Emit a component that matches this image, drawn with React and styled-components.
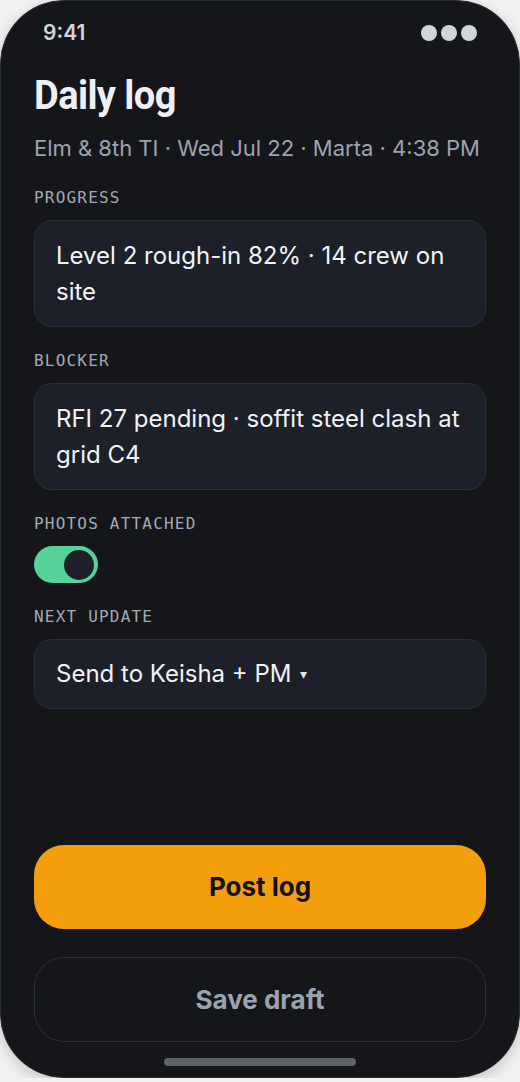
import React from 'react';
import styled, { createGlobalStyle } from 'styled-components';

const GlobalStyle = createGlobalStyle`
	html, body {
		margin: 0;
		padding: 0;
		background: #f1f1f1;
	}
	body {
		font-family: Inter, "Noto Sans", sans-serif;
		-webkit-font-smoothing: antialiased;
	}
	* { box-sizing: border-box; }
`;

const Phone = styled.div`
	width: 520px;
	height: 1078px;
	display: flex;
	flex-direction: column;
	background: #15161a;
	border: 1.5px solid #2a2d34;
	border-radius: 64px;
	overflow: hidden;
	box-shadow: 0 4px 14px rgba(0, 0, 0, 0.18);
`;

const StatusBar = styled.div`
	display: flex;
	justify-content: space-between;
	align-items: center;
	padding: 19px 42px 0 42px;
	height: 44px;
	color: #d1d5db;
	font-size: 21px;
	font-weight: 600;
`;

const Dots = styled.div`
	display: flex;
	gap: 4px;
	span {
		width: 16px;
		height: 16px;
		border-radius: 50%;
		background: #d1d5db;
	}
`;

const Content = styled.div`
	flex: 1;
	display: flex;
	flex-direction: column;
	padding: 0 33px;
`;

const Title = styled.h1`
	margin: 28px 0 0 0;
	align-self: flex-start;
	font-family: Roboto, "Liberation Sans", sans-serif;
	font-size: 40px;
	line-height: 46px;
	font-weight: 700;
	letter-spacing: -0.6px;
	color: #eef0f4;
	transform: scaleX(0.95);
	transform-origin: left center;
`;

const Meta = styled.div`
	margin-top: 15px;
	font-size: 22px;
	line-height: 28px;
	color: #9ca3af;
	white-space: nowrap;
`;

const Field = styled.div`
	display: flex;
	flex-direction: column;
	margin-top: ${(p) => p.$top}px;
`;

const Label = styled.div`
	font-family: "DejaVu Sans Mono", "Liberation Mono", monospace;
	font-size: 16px;
	line-height: 20px;
	letter-spacing: 1.2px;
	color: #a3a9b4;
	margin-bottom: 12px;
`;

const Box = styled.div`
	background: #1d2028;
	border: 1.5px solid #2c2f38;
	border-radius: 18px;
	padding: 16px 21px;
	min-height: ${(p) => (p.$select ? 70 : 107)}px;
	font-size: 24px;
	line-height: 36px;
	color: #f1f3f6;
	display: flex;
	align-items: center;
`;

const Caret = styled.span`
	font-size: 14px;
	margin-left: 9px;
	color: #e5e7eb;
`;

const Toggle = styled.div`
	width: 64px;
	height: 37px;
	border-radius: 19px;
	background: #55d39a;
	display: flex;
	align-items: center;
	justify-content: flex-end;
	padding-right: 4px;
	span {
		width: 30px;
		height: 30px;
		border-radius: 50%;
		background: #1e2029;
	}
`;

const Spacer = styled.div`
	flex: 1;
`;

const Button = styled.button`
	width: 100%;
	height: ${(p) => (p.$primary ? 84 : 85)}px;
	border-radius: 30px;
	border: ${(p) => (p.$primary ? 'none' : '1.5px solid #2c2f38')};
	background: ${(p) => (p.$primary ? '#f49e0b' : 'transparent')};
	color: ${(p) => (p.$primary ? '#121317' : '#9ca3af')};
	font-family: Inter, "Noto Sans", sans-serif;
	font-size: 26px;
	font-weight: 700;
	margin-top: ${(p) => p.$top || 0}px;
	padding-bottom: ${(p) => (p.$primary ? 3 : 2)}px;
	cursor: pointer;
`;

const HomeBar = styled.div`
	width: 192px;
	height: 8px;
	border-radius: 4px;
	background: #5f6368;
	align-self: center;
	margin: 16px 0 11px 0;
`;

export default function App() {
	return (
		<>
			<GlobalStyle />
			<Phone>
				<StatusBar>
					<span>9:41</span>
					<Dots><span /><span /><span /></Dots>
				</StatusBar>
				<Content>
					<Title>Daily log</Title>
					<Meta>Elm &amp; 8th TI · Wed Jul 22 · Marta · 4:38 PM</Meta>
					<Field $top={26}>
						<Label>PROGRESS</Label>
						<Box>Level 2 rough-in 82% · 14 crew on site</Box>
					</Field>
					<Field $top={24}>
						<Label>BLOCKER</Label>
						<Box>RFI 27 pending · soffit steel clash at grid C4</Box>
					</Field>
					<Field $top={24}>
						<Label>PHOTOS ATTACHED</Label>
						<Toggle><span /></Toggle>
					</Field>
					<Field $top={24}>
						<Label>NEXT UPDATE</Label>
						<Box $select>Send to Keisha + PM<Caret>▾</Caret></Box>
					</Field>
					<Spacer />
					<Button $primary>Post log</Button>
					<Button $top={28}>Save draft</Button>
					<HomeBar />
				</Content>
			</Phone>
		</>
	);
}
